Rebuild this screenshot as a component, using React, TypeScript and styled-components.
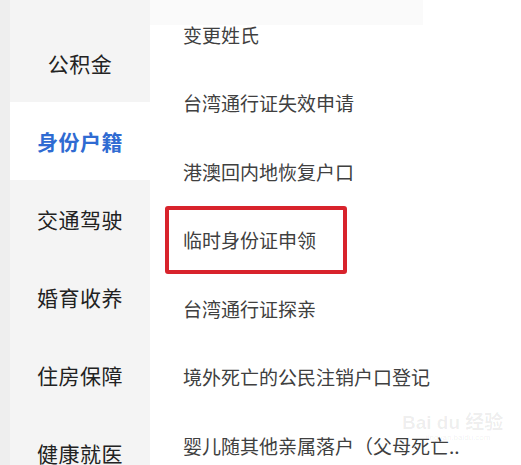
import React from "react";
import styled, { createGlobalStyle } from "styled-components";

const GlobalStyle = createGlobalStyle`
    html, body {
        margin: 0;
        padding: 0;
        background: #fff;
    }
    body {
        font-family: "Noto Sans CJK SC", "Noto Sans", sans-serif;
    }
`

const PageDiv = styled.div`
    position: relative;
    width: 521px;
    height: 465px;
    overflow: hidden;
    display: flex;
`

const EdgeDiv = styled.div`
    width: 10px;
    background-color: #eeeeee;
`

const SidebarDiv = styled.div`
    width: 140px;
    padding-top: 24px;
    background-color: #f4f4f4;
    display: flex;
    flex-direction: column;
`

const SideItemDiv = styled.div<{ $active?: boolean }>`
    flex: none;
    height: 78px;
    display: flex;
    align-items: center;
    justify-content: center;
    font-size: 21px;
    letter-spacing: 0.5px;
    background-color: ${p => p.$active ? "#ffffff" : "transparent"};
    color: ${p => p.$active ? "#2f6bd2" : "#222222"};
    font-weight: ${p => p.$active ? 700 : 400};
`

const ContentDiv = styled.div`
    flex: 1;
    padding: 0 0 0 15px;
    display: flex;
    flex-direction: column;
    align-items: flex-start;
    background: linear-gradient(#fafafa, #fafafa) no-repeat 0 0 / 273px 25px, #ffffff;
`

const RowDiv = styled.div<{ $marked?: boolean }>`
    box-sizing: border-box;
    flex: none;
    height: 68.5px;
    display: flex;
    align-items: center;
    padding-left: ${p => p.$marked ? "14px" : "18px"};
    width: ${p => p.$marked ? "182px" : "auto"};
    border: ${p => p.$marked ? "4px solid #d8232c" : "none"};
    border-radius: 3px;
    font-size: 19px;
    color: #404040;
    white-space: nowrap;
`

const WatermarkDiv = styled.div`
    position: absolute;
    left: 402px;
    top: 412px;
    display: flex;
    flex-direction: column;
    align-items: flex-start;
    color: rgba(0, 0, 0, 0.07);
    font-family: "Liberation Sans", "Noto Sans CJK SC", sans-serif;
    pointer-events: none;
`

const WatermarkMainDiv = styled.div`
    font-size: 19px;
    font-weight: 700;
    line-height: 21px;
`

const WatermarkSubDiv = styled.div`
    font-size: 8px;
    line-height: 9px;
    padding-left: 24px;
`

const categories = ["公积金", "身份户籍", "交通驾驶", "婚育收养", "住房保障", "健康就医"];

const services = [
    "变更姓氏",
    "台湾通行证失效申请",
    "港澳回内地恢复户口",
    "临时身份证申领",
    "台湾通行证探亲",
    "境外死亡的公民注销户口登记",
    "婴儿随其他亲属落户（父母死亡..",
];

const App = () => {
    return <PageDiv>
        <GlobalStyle />
        <EdgeDiv />
        <SidebarDiv>
            {categories.map(c =>
                <SideItemDiv key={c} $active={c === "身份户籍"}>{c}</SideItemDiv>
            )}
        </SidebarDiv>
        <ContentDiv>
            {services.map(s =>
                <RowDiv key={s} $marked={s === "临时身份证申领"}>{s}</RowDiv>
            )}
        </ContentDiv>
        <WatermarkDiv>
            <WatermarkMainDiv>Bai du 经验</WatermarkMainDiv>
            <WatermarkSubDiv>jingyan.baidu.com</WatermarkSubDiv>
        </WatermarkDiv>
    </PageDiv>
}

export default App;
